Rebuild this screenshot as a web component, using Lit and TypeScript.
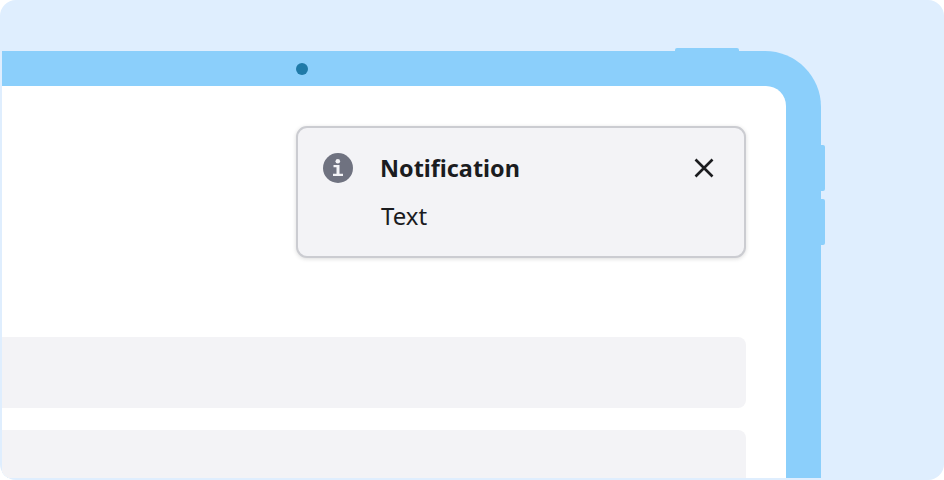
import { LitElement, css, html } from 'lit';
import { customElement } from 'lit/decorators.js';

@customElement('app-root')
export class AppRoot extends LitElement {
  static override styles = css`
    :host {
      display: block;
      width: 944px;
      height: 480px;
      background: #fff;
      font-family: 'Noto Sans', sans-serif;
      color: #1b1c1f;
    }

    .stage {
      box-sizing: border-box;
      height: 100%;
      padding: 51px 123px 2px 2px;
      background: #dfeefe;
      border-radius: 16px;
      overflow: hidden;
    }

    .tablet {
      position: relative;
      box-sizing: border-box;
      height: 100%;
      background: #8bcffb;
      border-top-right-radius: 56px;
      padding: 35px 35px 0 0;
    }

    .camera {
      position: absolute;
      top: 12px;
      left: 294px;
      width: 12px;
      height: 12px;
      border-radius: 50%;
      background: #1f7aa8;
    }

    .btn {
      position: absolute;
      background: #8bcffb;
    }

    .btn-top {
      top: -3px;
      left: 673px;
      width: 64px;
      height: 4px;
      border-radius: 2px 2px 0 0;
    }

    .btn-side {
      left: 818px;
      width: 5px;
      border-radius: 0 2px 2px 0;
    }

    .vol-up {
      top: 94px;
      height: 46px;
    }

    .vol-down {
      top: 148px;
      height: 46px;
    }

    .screen {
      height: 100%;
      box-sizing: border-box;
      background: #fff;
      border-top-right-radius: 20px;
      padding: 40px 40px 0 0;
      display: flex;
      flex-direction: column;
      align-items: flex-end;
      overflow: hidden;
    }

    .notice {
      box-sizing: border-box;
      width: 450px;
      height: 132px;
      flex: none;
      margin-bottom: 79px;
      padding: 24px 24px 0 24px;
      display: grid;
      grid-template-columns: 32px 1fr 32px;
      column-gap: 26px;
      row-gap: 16px;
      align-content: start;
      background: #f3f3f6;
      border: 2px solid #cbccd1;
      border-radius: 11px;
      box-shadow: 0 1px 4px rgba(0, 0, 0, 0.14);
    }

    .icon {
      display: block;
    }

    .title {
      font-size: 23.4px;
      line-height: 32px;
      font-weight: 700;
    }

    .close {
      display: block;
    }

    .body {
      grid-column: 2;
      margin-left: 1px;
      font-size: 24px;
      line-height: 32px;
    }

    .bar {
      width: 100%;
      height: 71px;
      flex: none;
      margin-bottom: 22px;
      background: #f3f3f6;
      border-radius: 0 8px 8px 0;
    }

    .rows {
      align-self: stretch;
    }
  `;

  override render() {
    return html`
      <div class="stage">
        <div class="tablet">
          <span class="btn btn-top"></span>
          <span class="btn btn-side vol-up"></span>
          <span class="btn btn-side vol-down"></span>
          <span class="camera"></span>
          <div class="screen">
            <div class="notice">
              <svg class="icon" width="32" height="32" viewBox="0 0 32 32">
                <circle cx="16" cy="16" r="15" fill="#6f7280" />
                <circle cx="15.8" cy="9.2" r="2.3" fill="#f3f3f6" />
                <path d="M11.5 13h6v8.7h3.5v2.3H11v-2.3h3.5v-6.4h-3z" fill="#f3f3f6" />
              </svg>
              <div class="title">Notification</div>
              <svg class="close" width="32" height="32" viewBox="0 0 32 32">
                <path d="M7.5 7.5l17 17M24.5 7.5l-17 17" stroke="#1b1c1f" stroke-width="2.6" fill="none" />
              </svg>
              <div class="body">Text</div>
            </div>
            <div class="rows">
              <div class="bar"></div>
              <div class="bar"></div>
            </div>
          </div>
        </div>
      </div>
    `;
  }
}
